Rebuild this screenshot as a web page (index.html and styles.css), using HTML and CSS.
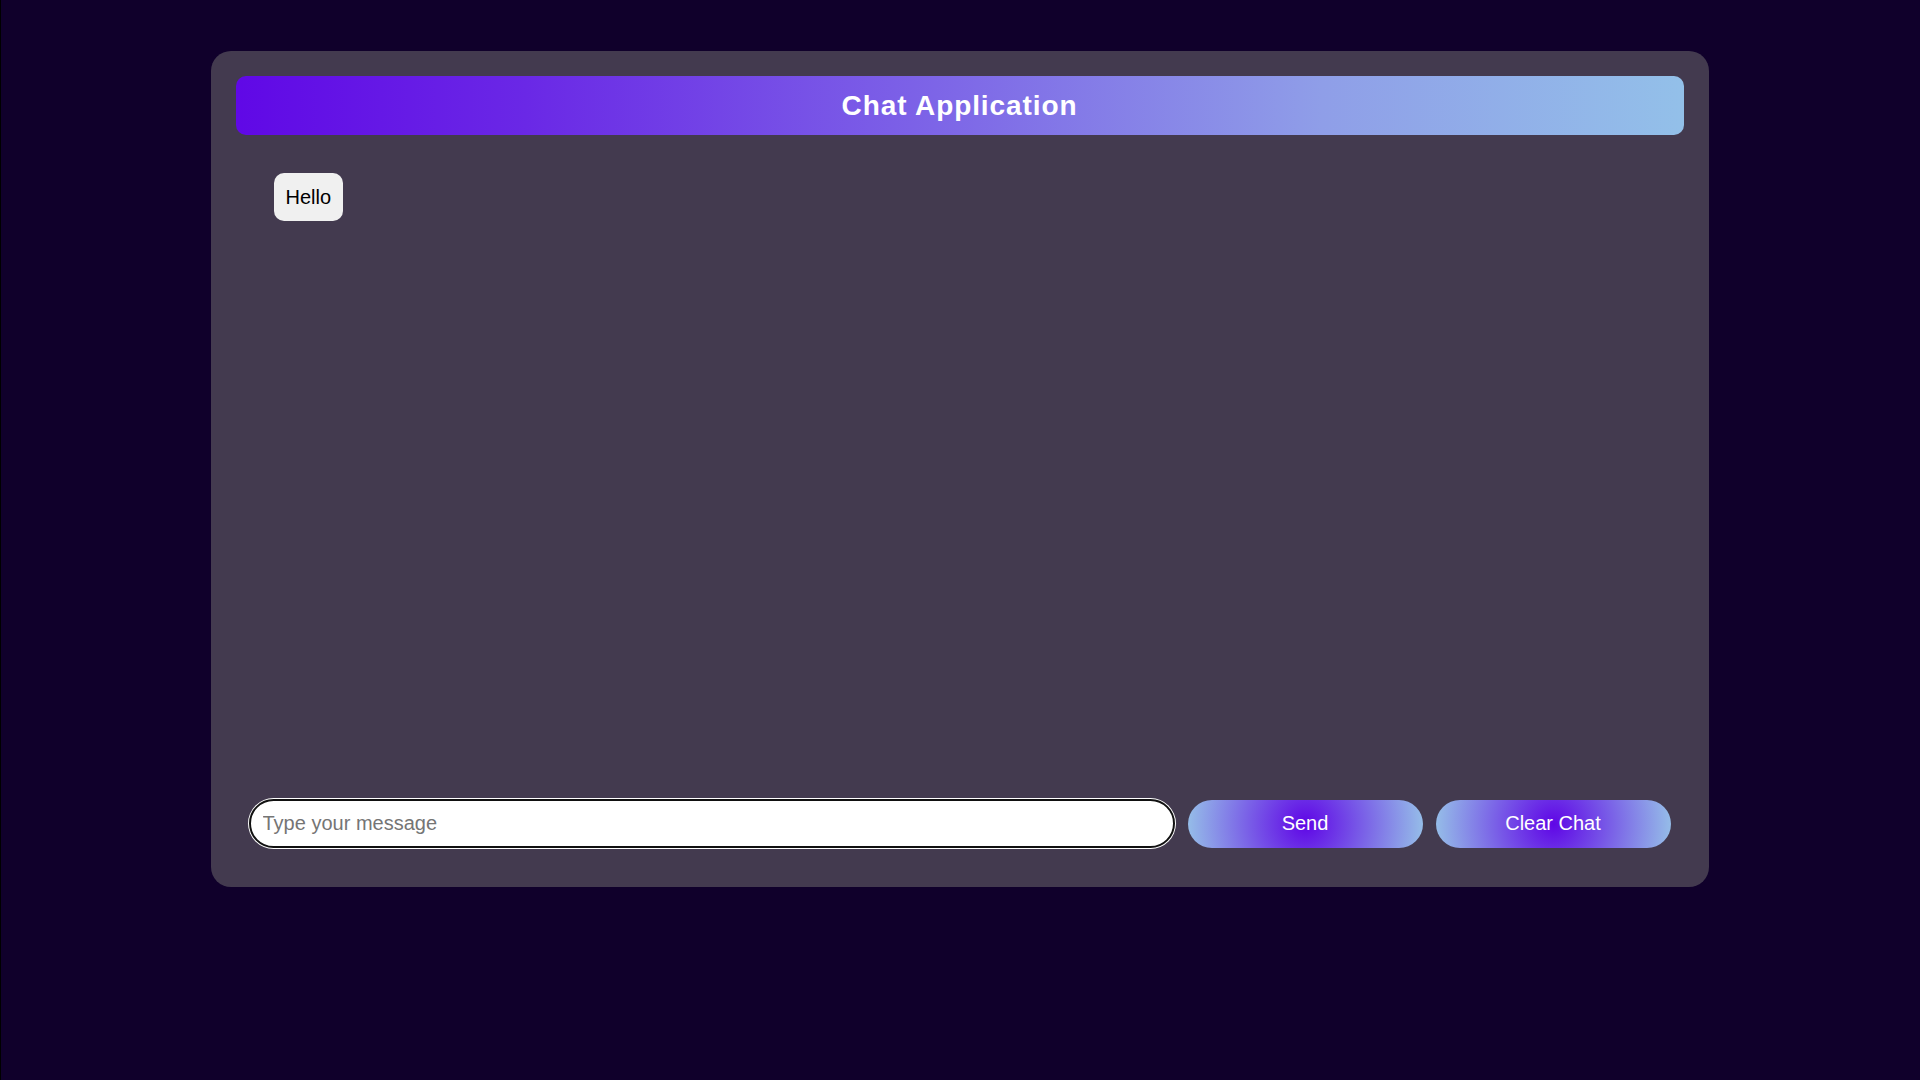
FILE: index.html
```html
<!DOCTYPE html>
<html lang="en">
<head>
<meta charset="UTF-8">
<title>Chat Application</title>
<link rel="stylesheet" href="styles.css">
</head>
<body>
<div class="chat-container">
  <div class="chat-header">Chat Application</div>
  <div class="chat-box">
    <div class="message">Hello</div>
  </div>
  <div class="input-area">
    <input class="message-input" type="text" placeholder="Type your message">
    <button class="btn">Send</button>
    <button class="btn">Clear Chat</button>
  </div>
</div>
</body>
</html>
```
FILE: styles.css
```css
html, body {
  margin: 0;
  padding: 0;
}
body {
  background: #10002b;
  font-family: "Liberation Sans", Arial, sans-serif;
  height: 1080px;
  padding-top: 51px;
  box-sizing: border-box;
  border-left: 1px solid #000;
}
.chat-container {
  width: 1498px;
  height: 836px;
  margin: 0 auto;
  box-sizing: border-box;
  padding: 25px;
  background: #433a4f;
  border-radius: 20px;
  display: flex;
  flex-direction: column;
  position: relative;
  left: -1px;
}
.chat-header {
  height: 59px;
  border-radius: 10px;
  background: linear-gradient(90deg, #6008e6 0%, #6a28e6 20%, #8f9ee8 75%, #93c0e9 100%);
  color: #fff;
  font-weight: bold;
  font-size: 28px;
  letter-spacing: 0.9px;
  display: flex;
  align-items: center;
  justify-content: center;
  padding-top: 1px;
  box-sizing: border-box;
}
.chat-box {
  flex: 1;
  padding: 38px;
  display: flex;
  flex-direction: column;
  align-items: flex-start;
}
.message {
  background: #f0f0f0;
  color: #000;
  font-size: 20px;
  line-height: 24px;
  padding: 12px;
  border-radius: 10px;
}
.input-area {
  display: flex;
  align-items: center;
  gap: 13px;
  padding: 13px 13px 14px 13px;
}
.message-input {
  flex: 1;
  min-width: 0;
  height: 49px;
  box-sizing: border-box;
  border: 2px solid #111;
  box-shadow: 0 0 0 1px #fff;
  border-radius: 25px;
  padding: 0 12px;
  font-family: "Liberation Sans", Arial, sans-serif;
  font-size: 20px;
  outline: none;
  background: #fff;
}
.message-input::placeholder {
  color: #757575;
}
.btn {
  flex: none;
  width: 235px;
  height: 48px;
  border: none;
  border-radius: 24px;
  background: radial-gradient(circle, #5f06e6 0%, #96c0e8 100%);
  color: #fff;
  font-family: "Liberation Sans", Arial, sans-serif;
  font-size: 20px;
  cursor: pointer;
}
```
